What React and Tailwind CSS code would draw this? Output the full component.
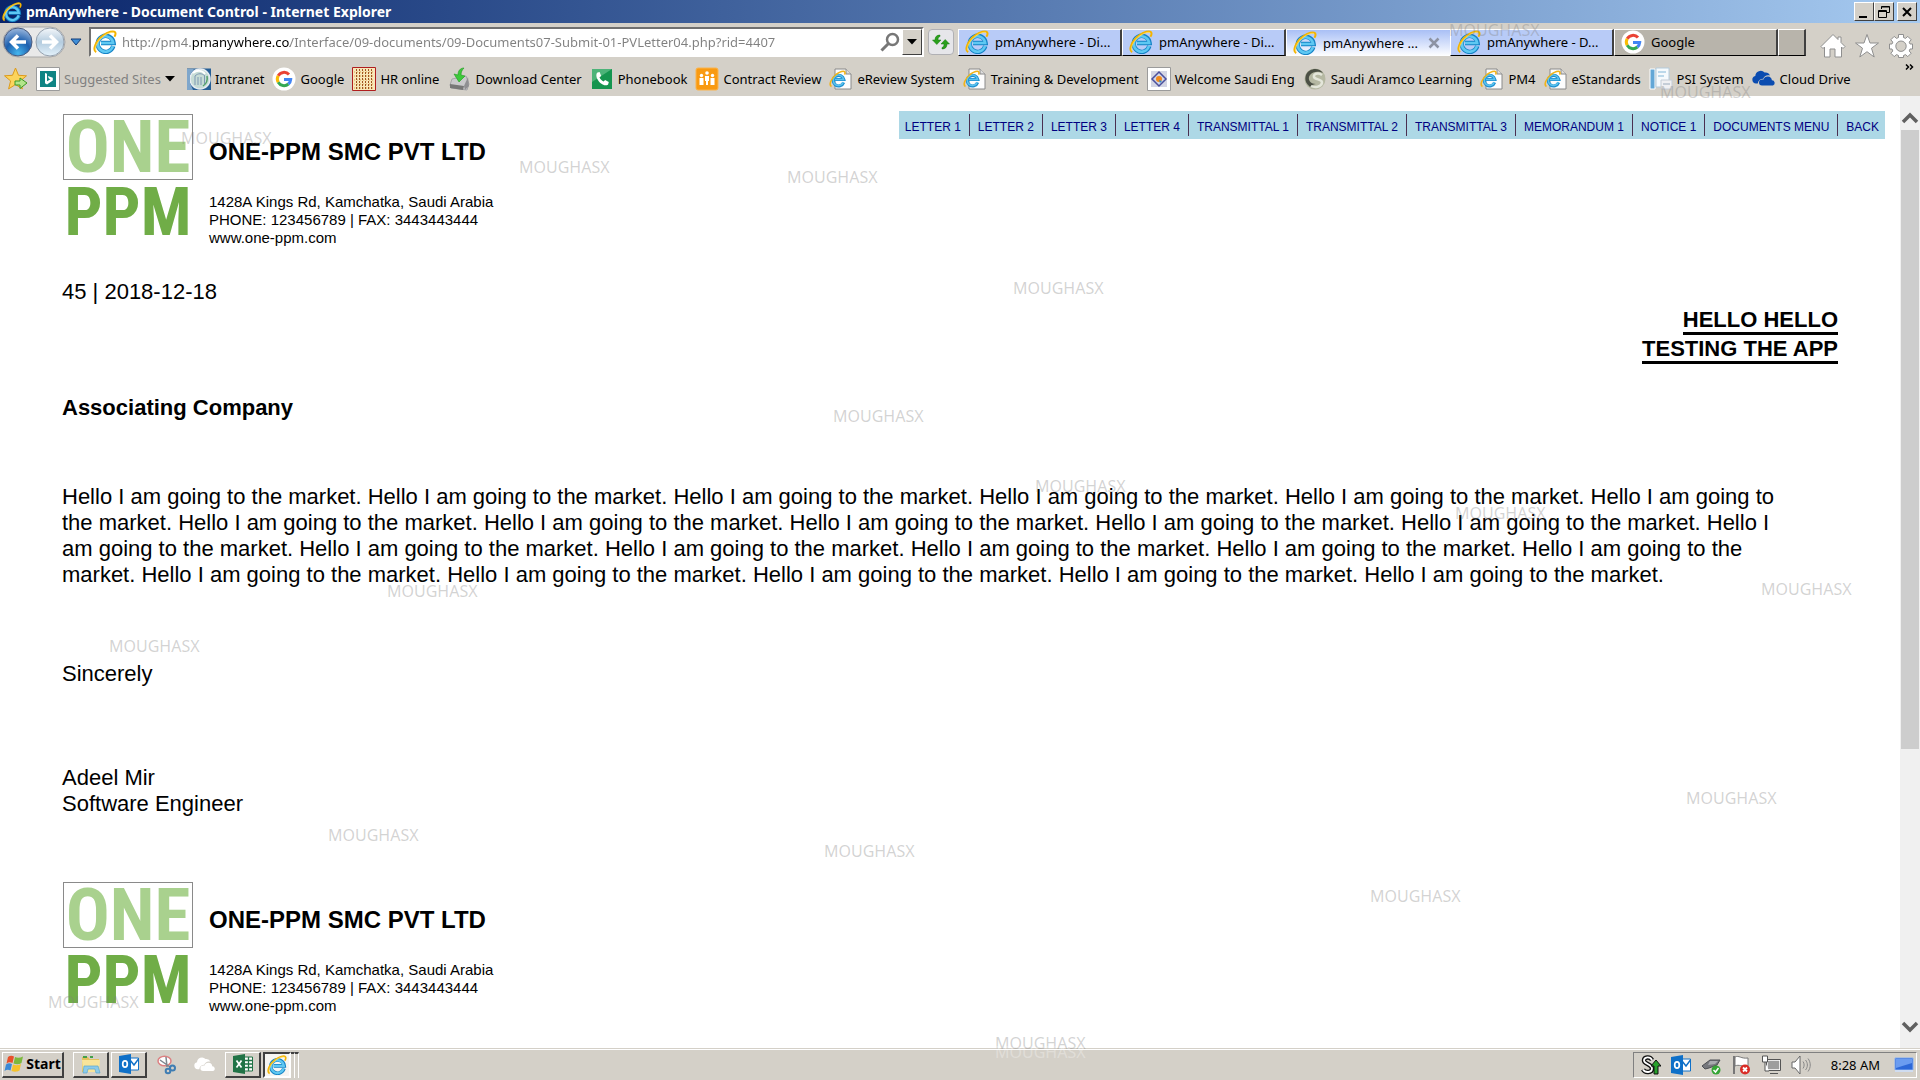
import { useState } from "react";
import clsx from "clsx";

const HELLO = "Hello I am going to the market.";

const navLinks = [
  "LETTER 1",
  "LETTER 2",
  "LETTER 3",
  "LETTER 4",
  "TRANSMITTAL 1",
  "TRANSMITTAL 2",
  "TRANSMITTAL 3",
  "MEMORANDUM 1",
  "NOTICE 1",
  "DOCUMENTS MENU",
  "BACK",
];

const watermarks = [
  "left-[1449px] top-[18px] text-[#808080]/35",
  "left-[1660px] top-[80px] text-[#808080]/35",
  "left-[181px] top-[126px] text-[#808080]/35",
  "left-[519px] top-[155px] text-[#808080]/35",
  "left-[787px] top-[165px] text-[#808080]/35",
  "left-[1013px] top-[276px] text-[#808080]/35",
  "left-[833px] top-[404px] text-[#808080]/35",
  "left-[1035px] top-[474px] text-[#808080]/35",
  "left-[1455px] top-[501px] text-[#808080]/35",
  "left-[1761px] top-[577px] text-[#808080]/35",
  "left-[387px] top-[579px] text-[#808080]/35",
  "left-[109px] top-[634px] text-[#808080]/35",
  "left-[1686px] top-[786px] text-[#808080]/35",
  "left-[328px] top-[823px] text-[#808080]/35",
  "left-[824px] top-[839px] text-[#808080]/35",
  "left-[1370px] top-[884px] text-[#808080]/35",
  "left-[48px] top-[990px] text-[#808080]/35",
  "left-[995px] top-[1031px] text-[#808080]/35",
  "left-[995px] top-[1040px] text-white/30",
];

function IeIcon({ className = "size-6" }) {
  return (
    <svg viewBox="0 0 24 24" className={className} fill="none" aria-hidden="true">
      <path d="M20.3 16.2A8 8 0 1 1 20.6 13H8" stroke="#1583c6" strokeWidth="4.4" />
      <path d="M20 16A7.7 7.7 0 1 1 20.2 13H8" stroke="#5ec8f2" strokeWidth="2.6" />
      <path
        d="M3.2 22.2C-1 20 3 10.500 10 5.500 15 1.800 20.500 .4 22 2.200c1 1.200.4 3-.6 4.600"
        stroke="#f4b400"
        strokeWidth="2"
      />
      <path d="M3 20.500C1.500 17 5 10 11 5.800 14.500 3.300 19 1.700 21 2.500" stroke="#ffe06a" strokeWidth=".8" />
    </svg>
  );
}

function IePageIcon() {
  return (
    <svg viewBox="0 0 24 24" className="size-6" fill="none" aria-hidden="true">
      <path d="M6 2h11l5 5v15H6z" fill="#fdfdfd" stroke="#8a8a8a" />
      <path d="M17 2v5h5" fill="#ddd" stroke="#8a8a8a" />
      <path d="M14.600 15.500A5.300 5.300 0 1 1 14.800 12.500H6" stroke="#1c8fd0" strokeWidth="3.200" />
      <path d="M14.400 15A5.200 5.200 0 1 1 14.600 12.500H6" stroke="#5cc3ee" strokeWidth="1.500" />
      <path d="M2.500 19.500C-.5 18 2 11.500 7 7.500c4-3 8-4 8.800-2.500.4.800.2 1.800-.2 2.600" stroke="#f0b41c" strokeWidth="1.600" />
    </svg>
  );
}

function GoogleIcon() {
  return (
    <svg viewBox="0 0 24 24" className="size-6" fill="none" strokeWidth="3" aria-hidden="true">
      <circle cx="12" cy="12" r="11.500" fill="#fff" />
      <path d="M17 7.600A6.700 6.700 0 0 0 6.200 8.700" stroke="#ea4335" />
      <path d="M6.200 8.700a6.700 6.700 0 0 0 0 6.600" stroke="#fbbc05" />
      <path d="M6.200 15.300a6.700 6.700 0 0 0 10.200 1.700" stroke="#34a853" />
      <path d="M16.400 17a6.700 6.700 0 0 0 2.300-4.600H12" stroke="#4285f4" />
    </svg>
  );
}

function BingIcon() {
  return (
    <svg viewBox="0 0 24 24" className="size-6" aria-hidden="true">
      <path d="M.5.5h23v23H.5z" fill="#fff" stroke="#9b9b9b" />
      <path d="M4 4h16v16H4z" fill="#0f8484" />
      <path d="m9 6 2 .8v7.400l3.500-1.900-1.700-.8-1-2.500 5 1.800v2.800L11 17.500l-2-1.200z" fill="#fff" />
    </svg>
  );
}

function AddFavIcon() {
  return (
    <svg viewBox="0 0 24 24" className="size-6" aria-hidden="true">
      <path d="m11.500 1 3 7.300 8 .5-6.100 5.100 2 8-6.900-4.400-6.900 4.400 2-8L.5 8.800l8-.5z" fill="#fcd45c" stroke="#dc9a1c" />
      <path d="M11 14h5v-3l7 5-7 5.500V18h-5z" fill="#b3e58b" stroke="#3d9a24" />
    </svg>
  );
}

function IntranetIcon() {
  return (
    <svg viewBox="0 0 24 24" className="size-6" fill="none" aria-hidden="true">
      <path d="M0 1.500h24V23H0z" fill="#265f96" />
      <circle cx="13" cy="12" r="10" fill="#c7dcd5" stroke="#e8edf2" strokeWidth="1.500" />
      <path d="M0 2h7L3 8v8l3 7H0z" fill="#7fa6cb" />
      <path d="M8 9c3-3 7-3 10 0M8 9v9M11 10v8M14 10v8M17.500 9v8" stroke="#7d97b3" />
      <path d="M6 6c4-3 9-3 12 1" stroke="#fff" strokeWidth="2" />
      <path d="M20 9c1 5-1 8-4 10" stroke="#54a06c" strokeWidth="1.500" />
    </svg>
  );
}

function HrIcon() {
  return (
    <svg viewBox="0 0 24 24" className="size-6" fill="none" aria-hidden="true">
      <path d="M.5.5h23v23H.5z" fill="#f8e7b9" stroke="#b01e1e" />
      <path d="M4.500 2v20M7.500 2v20M10.500 2v20M13.500 2v20M16.500 2v20M19.500 2v20" stroke="#a05420" strokeDasharray="2 1" />
      <path d="M2 5h20M2 9h20M2 13h20M2 17h20M2 21h20" stroke="#d9a550" strokeDasharray="1 2" />
    </svg>
  );
}

function DownloadIcon() {
  return (
    <svg viewBox="0 0 24 24" className="size-6" aria-hidden="true">
      <path d="m5 12 14-3 3 8-2 6-16-2-1-3z" fill="#c9c9cb" stroke="#a5a5a8" />
      <path d="m3 17 14 2-1 4-13-2z" fill="#777" />
      <path d="m17 19 4-9 1 9-4 4z" fill="#8f8f92" />
      <path d="M17 1c-4 0-6 3-6 7l-4-1 5 8 6-6-4-1c0-3 1-5 3-7z" fill="#3dc93a" stroke="#1c9a1f" strokeWidth=".6" />
    </svg>
  );
}

function PhoneIcon() {
  return (
    <svg viewBox="0 0 24 24" className="size-6" aria-hidden="true">
      <path d="M2 2h20v20H2z" fill="#16954f" />
      <path d="M2 2h20L2 15z" fill="#4db379" />
      <path
        d="M7.500 5.500 9.600 5l1.600 4-1.700 1.300c.8 2 2.200 3.400 4.100 4.300l1.500-1.600 3.700 1.900-.6 2.300c-.6 1.300-3 1.500-5.500.2-3.300-1.700-6-5.400-6.300-8.500-.1-1.600.3-2.800 1.100-3.400z"
        fill="#fff"
      />
    </svg>
  );
}

function ContractIcon() {
  return (
    <svg viewBox="0 0 24 24" className="size-6" fill="#fff" aria-hidden="true">
      <rect x="1" y="1" width="22" height="22" rx="2" fill="#f99a12" stroke="#fbb44d" />
      <circle cx="6.500" cy="8.500" r="1.700" />
      <circle cx="12" cy="6" r="1.800" />
      <circle cx="17.500" cy="8.500" r="1.700" />
      <path d="M4.500 11h4v7h-4zM15.500 11h4v7h-4zM10 9h4v5h-4zM11 13h2v5h-2z" />
    </svg>
  );
}

function WelcomeIcon() {
  return (
    <svg viewBox="0 0 24 24" className="size-6" fill="none" aria-hidden="true">
      <path d="M.5.5h23v23H.5z" fill="#fff" stroke="#9b9b9b" />
      <path d="M4 4h16v16H4z" fill="#d4d6e4" />
      <path d="m12 5 7 7-7 7-7-7z" stroke="#4a4f9d" strokeWidth="1.500" />
      <circle cx="12" cy="12" r="3" fill="#f28a1d" />
      <path d="m12 13 3 1-2 2z" fill="#2e8dcb" />
    </svg>
  );
}

function AramcoIcon() {
  return (
    <svg viewBox="0 0 24 24" className="size-6" fill="none" aria-hidden="true">
      <circle cx="12" cy="12" r="10.500" fill="#b5b8a2" />
      <path d="M20 6C16 0 6 1 3 8c-2 6 1 9 4 12 2-2 4-3 6-3-6 0-9-5-6-9s9-4 13-2z" fill="#4c5045" />
      <path d="M19 8c-4-3-9-1-8 2s9 2 8 6-7 5-11 3" stroke="#e4e6da" strokeWidth="2.500" />
    </svg>
  );
}

function PsiIcon() {
  return (
    <svg viewBox="0 0 24 24" className="size-6" aria-hidden="true">
      <path d="M1 2h5v20H1z" fill="#63a7d6" stroke="#fff" />
      <path d="M7 1h13v19H7z" fill="#f6fafd" stroke="#b4cbdc" />
      <path d="M9 4h8v2H9zM9 8h6v2H9z" fill="#bcd8ea" />
      <path d="M12 13h11v9H12z" fill="#f0f0f3" stroke="#c4ccd6" />
      <path d="M14 16h7v2h-7z" fill="#c5cdd7" />
    </svg>
  );
}

function CloudIcon({ className = "size-6 text-[#0b4cb0]" }) {
  return (
    <svg viewBox="0 0 24 24" className={className} fill="currentColor" aria-hidden="true">
      <path d="M5.800 16.500H4A3.800 3.800 0 0 1 3.300 9 5.400 5.400 0 0 1 12.600 5.500 5 5 0 0 1 18 8.500c-3-1-6 .5-6.700 3.200-3 0-5.200 1.900-5.500 4.800z" />
      <path d="M10 18.500a3 3 0 0 1 0-6h1.500a4.300 4.300 0 0 1 8.400.8A2.700 2.700 0 0 1 21 18.500z" />
    </svg>
  );
}

const favorites = [
  { label: "Intranet", Icon: IntranetIcon },
  { label: "Google", Icon: GoogleIcon },
  { label: "HR online", Icon: HrIcon },
  { label: "Download Center", Icon: DownloadIcon },
  { label: "Phonebook", Icon: PhoneIcon },
  { label: "Contract Review", Icon: ContractIcon },
  { label: "eReview System", Icon: IePageIcon },
  { label: "Training & Development", Icon: IePageIcon },
  { label: "Welcome Saudi Eng", Icon: WelcomeIcon },
  { label: "Saudi Aramco Learning", Icon: AramcoIcon },
  { label: "PM4", Icon: IePageIcon },
  { label: "eStandards", Icon: IePageIcon },
  { label: "PSI System", Icon: PsiIcon },
  { label: "Cloud Drive", Icon: CloudIcon },
];

function TitleBar() {
  const button =
    "flex h-[19px] w-5 items-center justify-center border border-t-white border-l-white border-r-[#404040] border-b-[#404040] bg-[#d4d0c8]";

  return (
    <header className="flex h-[23px] items-center bg-linear-to-r from-[#0a246a] to-[#a6caf0] pr-[3px] pl-0.5">
      <IeIcon className="size-5" />
      <h1 className="ml-1 grow text-[14px] leading-5 font-bold text-white">
        pmAnywhere - Document Control - Internet Explorer
      </h1>
      <button className={button} aria-label="Minimize">
        <svg viewBox="0 0 16 16" className="size-4" fill="none" stroke="#000" strokeWidth="2">
          <path d="M3 13h8" />
        </svg>
      </button>
      <button className={button} aria-label="Restore">
        <svg viewBox="0 0 16 16" className="size-4" fill="none" stroke="#000">
          <path d="M5.500 5V2.500h8v6H11M5.500 3h8M2.500 6.500h8v7h-8zM2.500 7.500h8" />
        </svg>
      </button>
      <button className={clsx(button, "ml-[3px]")} aria-label="Close">
        <svg viewBox="0 0 16 16" className="size-4" fill="none" stroke="#000" strokeWidth="2">
          <path d="m4 4 8 8M12 4l-8 8" />
        </svg>
      </button>
    </header>
  );
}

function Tab({ label, google, active }) {
  return (
    <button
      role="tab"
      aria-selected={!!active}
      className={clsx(
        "flex h-[27px] w-[164px] min-w-0 items-center gap-1.5 border-t border-l border-white pl-1.5 text-left",
        active
          ? "bg-linear-to-b from-[#a9bff5] to-white"
          : "border-r-2 border-b border-r-[#404040] border-b-black",
        !active && (google ? "bg-[#b8b4ab]" : "bg-[#b8cbf7]")
      )}
    >
      <span className="shrink-0">{google ? <GoogleIcon /> : <IeIcon />}</span>
      <span className="min-w-0 grow whitespace-nowrap">{label}</span>
      {active && (
        <svg viewBox="0 0 12 12" className="mr-2.5 size-3 shrink-0" stroke="#8d93a3" strokeWidth="2.500">
          <path d="m1.500 1.500 9 9M10.500 1.500l-9 9" />
        </svg>
      )}
    </button>
  );
}

function Toolbar() {
  const [url, setUrl] = useState(
    "http://pm4.pmanywhere.co/Interface/09-documents/09-Documents07-Submit-01-PVLetter04.php?rid=4407"
  );

  return (
    <div className="flex h-[38px] items-center pr-1.5 pl-0.5 text-[13px]">
      <div className="flex shrink-0 items-center">
        <svg viewBox="0 0 64 32" className="h-8 w-16" fill="none" aria-hidden="true">
          <defs>
            <radialGradient id="back" cx=".5" cy=".9" r=".9">
              <stop offset="0" stopColor="#45b6ee" />
              <stop offset=".5" stopColor="#1d5fae" />
              <stop offset="1" stopColor="#9db9de" />
            </radialGradient>
            <linearGradient id="fwd" x1="0" y1="0" x2="0" y2="1">
              <stop offset="0" stopColor="#f4f7fa" />
              <stop offset=".5" stopColor="#b4ccdf" />
              <stop offset="1" stopColor="#e4f2fb" />
            </linearGradient>
          </defs>
          <rect x="1" y="1" width="62" height="30" rx="15" fill="#e9e9e9" stroke="#a8a8a8" />
          <circle cx="16" cy="16" r="14" fill="url(#back)" stroke="#4a5a7d" />
          <path d="M24 16H10M16 9.500 9.500 16l6.500 6.500" stroke="#fff" strokeWidth="3.500" />
          <circle cx="48" cy="16" r="14" fill="url(#fwd)" stroke="#95a1ae" />
          <path d="M40 16h14M48 9.500l6.500 6.500-6.500 6.500" stroke="#fff" strokeWidth="3.500" />
        </svg>
        <svg viewBox="0 0 12 8" className="ml-1 h-2 w-3" aria-hidden="true">
          <path d="M1 1h10L6 7z" fill="#3f8fd8" stroke="#123c78" />
        </svg>
      </div>

      <div className="ml-[7px] flex h-[30px] min-w-0 grow items-center border-2 border-t-[#707070] border-r-white border-b-white border-l-[#707070] bg-white pl-0.5">
        <IeIcon className="size-6 shrink-0" />
        <label htmlFor="address" className="hidden">
          Address
        </label>
        <input
          id="address"
          aria-label="Address"
          value={url}
          onChange={(e) => setUrl(e.target.value)}
          className="ml-[5px] h-6 min-w-0 grow bg-[linear-gradient(90deg,#808080_70px,#000_70px,#000_168px,#808080_168px)] bg-clip-text text-transparent outline-none"
        />
        <svg viewBox="0 0 20 20" className="mr-0.5 size-5 shrink-0" fill="none" stroke="#777" strokeWidth="2.500" aria-hidden="true">
          <circle cx="12.500" cy="7.500" r="5.500" />
          <path d="m8.500 11.500-7 7" strokeWidth="3" />
        </svg>
        <button
          aria-label="Show address bar list"
          className="flex h-[26px] w-5 shrink-0 items-center justify-center border border-t-white border-r-[#404040] border-b-[#404040] border-l-white bg-[#d4d0c8]"
        >
          <svg viewBox="0 0 10 6" className="h-1.5 w-2.5">
            <path d="M0 0h10L5 5.500z" />
          </svg>
        </button>
      </div>

      <button
        aria-label="Refresh"
        className="mx-1 flex h-[26px] w-[26px] shrink-0 items-center justify-center rounded-sm border border-[#b0b0b4] bg-[#e6e6ea]"
      >
        <svg viewBox="0 0 20 20" className="size-5" fill="#2aa01c" stroke="#157a10" strokeWidth=".5">
          <path d="M9 3C5.500 3 4 5 4 8H1.500L5.800 12.500 10 8H7c0-2 .5-3 2-3.500z" />
          <path d="M11 17c3.500 0 5-2 5-5h2.500L14.200 7.500 10 12h3c0 2-.5 3-2 3.500z" />
        </svg>
      </button>

      <div role="tablist" className="flex shrink-0 items-center">
        <Tab label="pmAnywhere - Di..." />
        <Tab label="pmAnywhere - Di..." />
        <Tab label="pmAnywhere ..." active />
        <Tab label="pmAnywhere - D..." />
        <Tab label="Google" google />
        <button
          aria-label="New tab"
          className="h-[27px] w-7 border-t border-r-2 border-b border-l border-t-white border-r-[#404040] border-b-black border-l-white bg-[#b8b4ab]"
        />
      </div>

      <div className="mt-2 ml-3.5 flex shrink-0 gap-2">
        <button aria-label="Home">
          <svg viewBox="0 0 26 26" className="size-[26px]" fill="#fff" stroke="#8f8f8f">
            <path d="M13 1.500 1 13.500l2 2 1.500-1.500v10H10v-8h5v8h6.500V14l1.500 1.500 2-2-4-4V4h-3v2.500z" />
          </svg>
        </button>
        <button aria-label="Favorites">
          <svg viewBox="0 0 26 26" className="size-[26px]" fill="#fff" stroke="#8f8f8f">
            <path d="m13 1.500 3 8.500h8.500l-7 5.200 2.700 8.800-7.200-5.300L5.800 24l2.700-8.800-7-5.200H10z" />
          </svg>
        </button>
        <button aria-label="Tools">
          <svg viewBox="0 0 26 26" className="size-[26px]" fill="#fff" stroke="#8f8f8f">
            <path
              fillRule="evenodd"
              d="M10.500 1.500h5v3l2 .9 2.300-2 3.400 3.400-2 2.300.8 1.900h2.500v5H22l-.8 2 2 2.200-3.400 3.400-2.300-2-2 .9v2h-5v-2l-2-.9-2.300 2-3.400-3.400 2-2.200-.8-2H1.500v-5H4l.8-1.900-2-2.300 3.400-3.400 2.300 2 2-.9zM13 8a5.200 5.200 0 1 0 0 10.400A5.200 5.200 0 0 0 13 8z"
            />
          </svg>
        </button>
      </div>
    </div>
  );
}

function FavoritesBar() {
  return (
    <nav className="flex h-[35px] items-center pr-1.5 pl-1 text-[13px] whitespace-nowrap">
      <button aria-label="Add to Favorites bar">
        <AddFavIcon />
      </button>
      <button className="ml-2 flex items-center gap-1 text-[#808080]">
        <BingIcon />
        Suggested Sites
        <svg viewBox="0 0 10 6" className="h-1.5 w-2.5">
          <path d="M0 0h10L5 5.500z" fill="#000" />
        </svg>
      </button>
      <ul className="ml-3 flex grow gap-2">
        {favorites.map(({ label, Icon }) => (
          <li key={label}>
            <a href="#" className="flex items-center gap-1">
              <Icon />
              {label}
            </a>
          </li>
        ))}
      </ul>
      <button aria-label="More favorites" className="mb-6 h-2">
        <svg viewBox="0 0 9 6" className="h-1.5 w-[9px]" fill="none" stroke="#000" strokeWidth="1.500">
          <path d="m1 .5 2.500 2.500L1 5.500M5 .5 7.500 3 5 5.500" />
        </svg>
      </button>
    </nav>
  );
}

function Letterhead() {
  return (
    <div className="flex items-start gap-4">
      <div
        aria-label="One PPM logo"
        className="w-[130px] shrink-0 text-center font-['Roboto_Condensed',Roboto,sans-serif] leading-[64px] font-bold"
      >
        <div className="flex h-[66px] items-center justify-center border border-[#8a8a8a] text-[73px] text-[#a9d18e]">
          ONE
        </div>
        <div className="flex h-16 items-center justify-center text-[67px] text-[#70ad47]">PPM</div>
      </div>
      <div className="pt-6">
        <h2 className="text-2xl leading-7 font-bold">ONE-PPM SMC PVT LTD</h2>
        <address className="mt-[27px] text-[15px] leading-[18px] not-italic">
          1428A Kings Rd, Kamchatka, Saudi Arabia
          <br />
          PHONE: 123456789 | FAX: 3443443444
          <br />
          www.one-ppm.com
        </address>
      </div>
    </div>
  );
}

function Letter() {
  return (
    <main className="min-w-0 grow overflow-hidden bg-white font-['Liberation_Sans',Arial,sans-serif] text-[22px] leading-[26px] text-black">
      <div className="flex items-start justify-between pr-[15px] pl-[63px]">
        <div className="pt-[18px]">
          <Letterhead />
        </div>
        <nav className="mt-[15px] flex h-7 items-center bg-[#add8e6] text-xs text-[#000080]">
          {navLinks.map((label, i) => (
            <a
              key={label}
              href="#"
              className={clsx(
                "pt-1 leading-[18px]",
                i === 0 ? "pr-2 pl-1.5" : "pl-2",
                i < navLinks.length - 1 ? "border-r border-[#4a3050] pr-2" : "pr-1.5"
              )}
            >
              {label}
            </a>
          ))}
        </nav>
      </div>

      <div className="pr-[62px] pl-[62px]">
        <p className="mt-8">45 | 2018-12-18</p>
        <div className="mt-[3px] flex flex-col items-end gap-0.5 leading-6 font-bold">
          <p className="border-b-3 border-black">HELLO HELLO</p>
          <p className="border-b-3 border-black">TESTING THE APP</p>
        </div>
        <p className="mt-[31px] font-bold">Associating Company</p>
        <p className="mt-[63px]">
          {HELLO} {HELLO} {HELLO} {HELLO} {HELLO} Hello I am going to
          <br />
          the market. {HELLO} {HELLO} {HELLO} {HELLO} {HELLO} Hello I
          <br />
          am going to the market. {HELLO} {HELLO} {HELLO} {HELLO} Hello I am going to the
          <br />
          market. {HELLO} {HELLO} {HELLO} {HELLO} {HELLO}
        </p>
        <p className="mt-[73px]">Sincerely</p>
        <p className="mt-[78px]">
          Adeel Mir
          <br />
          Software Engineer
        </p>
      </div>

      <footer className="mt-[65px] pl-[63px]">
        <Letterhead />
      </footer>
    </main>
  );
}

function ScrollBar() {
  return (
    <div className="flex w-5 shrink-0 flex-col items-center bg-[#f0f0f0]">
      <svg viewBox="0 0 20 34" className="h-[34px] w-5" fill="none" stroke="#606060" strokeWidth="3.500">
        <path d="m3 26 7-7 7 7" />
      </svg>
      <div className="h-[65%] w-[18px] bg-[#cdcdcd]" />
      <svg viewBox="0 0 20 42" className="mt-auto h-[42px] w-5" fill="none" stroke="#606060" strokeWidth="3.500">
        <path d="m3 17 7 7 7-7" />
      </svg>
    </div>
  );
}

function OutlookIcon() {
  return (
    <svg viewBox="0 0 20 20" className="size-5" fill="none" aria-hidden="true">
      <path d="M11 4h8.500v12H11z" fill="#fff" stroke="#0f70c8" />
      <path d="m11 6 4 5 4.500-6" stroke="#0f70c8" strokeWidth="1.500" />
      <path d="M0 2 12 0v20L0 18z" fill="#0f70c8" />
      <ellipse cx="6" cy="10" rx="2.300" ry="3.200" stroke="#fff" strokeWidth="1.700" />
    </svg>
  );
}

function TaskBar() {
  const raised =
    "flex h-[26px] items-center justify-center border-t border-r-2 border-b-2 border-l border-t-white border-r-[#404040] border-b-[#404040] border-l-white bg-[#d4d0c8]";

  return (
    <footer className="flex h-8 shrink-0 items-center border-t border-[#d4d0c8] bg-[#d4d0c8] pr-[3px] pl-0.5 shadow-[inset_0_1px_0_#fff]">
      <button className={clsx(raised, "w-[62px] gap-0.5 text-[14px] font-bold")}>
        <svg viewBox="0 0 20 20" className="size-5" aria-hidden="true">
          <path d="M4 3c2-1.500 4-1.500 6-.5L8.500 9c-2-1-4-1-6 .5z" fill="#e8502a" />
          <path d="M11 3c2 1 5 1 8-.5L17.500 9c-2.500 1.500-5 1.500-8 .5z" fill="#7cb93c" />
          <path d="M2 10.500c2-1.500 4-1.500 6-.5l-1.500 6.500c-2-1-4-1-6 .5z" fill="#3c8ad6" />
          <path d="M9 10.500c3 1 5 1 8-.5l-1.500 6.500c-3 1.500-5 1.500-8 .5z" fill="#f5c22b" />
        </svg>
        Start
      </button>
      <div className="ml-[9px] flex items-center gap-0.5">
        <button className={clsx(raised, "w-9")} aria-label="Explorer">
          <svg viewBox="0 0 20 20" className="size-5">
            <path d="M1 3h6l1.500 2H18v13H1z" fill="#e3c25d" />
            <path d="M2 2h4v2H2zM9 2h3v2H9z" fill="#44a04a" />
            <path d="M1 6h18l-1 12H2z" fill="#f8e49a" />
            <path d="M3 12h14l2 7h-4l-1-4H7l-1 4H2z" fill="#8ccbea" stroke="#5aa7cf" strokeWidth=".7" />
          </svg>
        </button>
        <button className={clsx(raised, "w-9")} aria-label="Outlook">
          <OutlookIcon />
        </button>
        <button className="flex h-[26px] w-9 items-center justify-center" aria-label="Snipping Tool">
          <svg viewBox="0 0 20 20" className="size-5" fill="none">
            <ellipse cx="7.500" cy="6" rx="6.500" ry="4.800" fill="#fff" stroke="#dc8082" strokeWidth="1.500" />
            <path d="m3 5 10 7M9 2l1 10" stroke="#7d868e" strokeWidth="1.500" />
            <circle cx="15.500" cy="13" r="2.500" stroke="#3f7db3" strokeWidth="2" />
            <circle cx="11" cy="16" r="2.300" stroke="#3f7db3" strokeWidth="2" />
          </svg>
        </button>
        <button className="flex h-[26px] w-9 items-center justify-center" aria-label="OneDrive">
          <CloudIcon className="size-[22px] text-white" />
        </button>
        <button className={clsx(raised, "w-9")} aria-label="Excel">
          <svg viewBox="0 0 20 20" className="size-5" fill="none">
            <path d="M11 3h8.500v14H11z" fill="#fff" stroke="#217346" />
            <path d="M11 6.500h8M11 10h8M11 13.500h8M15.500 3v14" stroke="#217346" strokeWidth="1.300" />
            <path d="M0 2 12 0v20L0 18z" fill="#217346" />
            <path d="m3.500 6.500 5 7M8.500 6.500l-5 7" stroke="#fff" strokeWidth="1.700" />
          </svg>
        </button>
        <div className="flex">
          <button
            aria-label="Internet Explorer"
            className="flex h-[26px] w-7 items-center justify-center border-2 border-t-[#404040] border-r-white border-b-white border-l-[#404040] bg-[#f6f5f2]"
          >
            <IeIcon className="size-5" />
          </button>
          <span className="h-[26px] w-1 border-t-2 border-r border-t-[#404040] border-r-white" />
          <span className="h-[26px] w-1 border-t-2 border-r border-t-[#404040] border-r-white" />
        </div>
      </div>

      <div className="ml-auto flex h-[26px] items-center gap-2.5 border-t border-r border-b border-l border-t-[#808080] border-r-white border-b-white border-l-[#808080] pr-0.5 pl-[7px]">
        <svg viewBox="0 0 20 20" className="size-5" fill="none">
          <path d="M11 5C9 1 3 2 3 5.500S11 9 11 13.500 4 18 2 14.500" stroke="#111" strokeWidth="4.500" />
          <path d="M11 5C9 1 3 2 3 5.500S11 9 11 13.500 4 18 2 14.500" stroke="#fff" strokeWidth="1.800" />
          <path d="M13 19V11h-3l5-6 5 6h-3v8z" fill="#27a02b" stroke="#111" />
        </svg>
        <OutlookIcon />
        <svg viewBox="0 0 20 20" className="size-5">
          <path d="m1 11 8-6h10l-3 5-8 3-4 1z" fill="#75777c" stroke="#4d4f54" />
          <path d="m9 6 8 0-3 3-7 1z" fill="#a9abb0" />
          <circle cx="15" cy="15" r="4.500" fill="#35a535" />
          <path d="m12.500 15 2 2 3-4" fill="none" stroke="#fff" strokeWidth="1.500" />
        </svg>
        <svg viewBox="0 0 20 20" className="size-5">
          <path d="M3 1v18" stroke="#777" strokeWidth="2" />
          <path d="M4 2c4-2 6 2 13 1v8c-6 1-9-2-13 0z" fill="#fff" stroke="#777" />
          <circle cx="14" cy="14.500" r="5" fill="#d92c26" />
          <path d="m12 12.500 4 4M16 12.500l-4 4" stroke="#fff" strokeWidth="1.800" />
        </svg>
        <svg viewBox="0 0 20 20" className="size-5">
          <path d="M6 5h13v10H6z" fill="#9d9d9d" stroke="#fff" strokeWidth="1.500" />
          <path d="M5.500 4.500h14v11h-14zM9 18.500h8" fill="none" stroke="#555" />
          <path d="M1.500 1h5v6h-5zM4 7v9h4" fill="#fff" stroke="#555" />
        </svg>
        <svg viewBox="0 0 20 20" className="size-5" fill="none">
          <path d="M1 7h3l5-6v18l-5-6H1z" fill="#fff" stroke="#666" />
          <path d="M12 6.500c1.500 2 1.500 5 0 7M14.500 5c2.500 3 2.500 7 0 10M17 3.500c3 4 3 9 0 13" stroke="#888" />
        </svg>
        <time className="ml-2.5 text-[13px] whitespace-nowrap">8:28 AM</time>
        <svg viewBox="0 0 20 20" className="ml-1 size-5">
          <path d="M1 3h18v12H1z" fill="#2d68d8" stroke="#86aef0" />
          <path d="M2 4h16v4L2 13z" fill="#6b9cf0" />
          <path d="M1 15h18v2H1z" fill="#cfdcf0" />
        </svg>
      </div>
    </footer>
  );
}

export default function App() {
  return (
    <div className="relative flex h-screen flex-col overflow-hidden bg-[#d4d0c8] font-['Noto_Sans',Tahoma,sans-serif] text-[14px] leading-5 text-black">
      <TitleBar />
      <Toolbar />
      <FavoritesBar />
      <div className="flex min-h-0 grow">
        <Letter />
        <ScrollBar />
      </div>
      <TaskBar />
      {watermarks.map((place) => (
        <span
          key={place}
          className={clsx("pointer-events-none absolute text-base", place)}
        >
          MOUGHASX
        </span>
      ))}
    </div>
  );
}
